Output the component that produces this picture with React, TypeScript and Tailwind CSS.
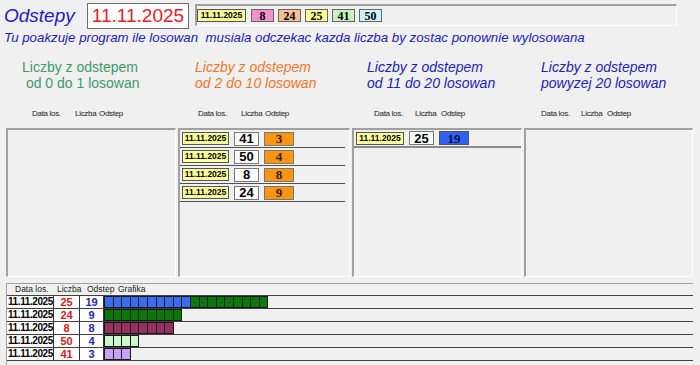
const sans = "font-['Liberation_Sans',Arial,sans-serif]";
const serif = "font-['Liberation_Serif','Times_New_Roman',serif]";

const sunken =
  "border-t-2 border-l-2 border-r border-b border-t-[#a0a0a0] border-l-[#a0a0a0] border-r-white border-b-white";

const midRows = [
  { n: 41, o: 3 },
  { n: 50, o: 4 },
  { n: 8, o: 8 },
  { n: 24, o: 9 },
];

const graphRows = [
  { n: 25, o: 19, parts: [{ c: "#3a6cf4", k: 10 }, { c: "#0a780a", k: 9 }] },
  { n: 24, o: 9, parts: [{ c: "#0a780a", k: 9 }] },
  { n: 8, o: 8, parts: [{ c: "#963060", k: 8 }] },
  { n: 50, o: 4, parts: [{ c: "#ccf5cc", k: 4 }] },
  { n: 41, o: 3, parts: [{ c: "#c8a0f5", k: 3 }] },
];

function DateChip({ w }: { w: string }) {
  return (
    <div
      className={`${w} h-[13px] bg-[#ffff99] border border-[#555] flex items-center justify-center text-[8.5px] font-bold leading-none text-black`}
    >
      11.11.2025
    </div>
  );
}

function Bars({ parts }: { parts: { c: string; k: number }[] }) {
  const cells: string[] = [];
  parts.forEach((p) => {
    for (let i = 0; i < p.k; i++) cells.push(p.c);
  });
  const step = 8.6;
  return (
    <svg width={Math.round(cells.length * step) + 1} height={12} shapeRendering="crispEdges">
      {cells.map((c, i) => {
        const x0 = Math.round(i * step);
        const x1 = Math.round((i + 1) * step);
        return (
          <rect key={i} x={x0 + 0.5} y={0.5} width={x1 - x0} height={11} fill={c} stroke="#1a1a1a" strokeWidth={1} />
        );
      })}
    </svg>
  );
}

export default function App() {
  return (
    <div className={`w-[700px] h-[365px] overflow-hidden bg-[#f0f0f0] ${sans}`}>
      {/* top bar */}
      <div className="flex items-start pl-[4px] pt-[3px] h-[29px]">
        <div className="w-[83px] mt-[2px] text-[19px] leading-[22px] italic text-[#1c1cc4]">Odstepy</div>
        <div className="w-[102px] h-[26px] bg-white border border-[#707070] flex items-center justify-center text-[19px] text-[#e0202e]">
          11.11.2025
        </div>
        <div className={`ml-[6px] mt-[1px] w-[482px] h-[22px] ${sunken} flex items-center`}>
          <DateChip w="w-[49px]" />
          <div className={`flex gap-[4px] ml-[5px] ${serif} text-[12px] font-bold text-black leading-none`}>
            <div className="w-[23px] h-[13px] bg-[#f590c8] border border-[#666] flex items-center justify-center">8</div>
            <div className="w-[23px] h-[13px] bg-[#fbc090] border border-[#666] flex items-center justify-center">24</div>
            <div className="w-[23px] h-[13px] bg-[#ffff99] border border-[#666] flex items-center justify-center">25</div>
            <div className="w-[23px] h-[13px] bg-[#c8f0c0] border border-[#666] flex items-center justify-center">41</div>
            <div className="w-[23px] h-[13px] bg-[#ccf4ff] border border-[#666] flex items-center justify-center">50</div>
          </div>
        </div>
      </div>

      {/* subtitle */}
      <div className="pl-[4px] mt-[1px] h-[16px] text-[13.3px] leading-[16px] italic text-[#2020b8] whitespace-pre">
        Tu poakzuje program ile losowan  musiala odczekac kazda liczba by zostac ponownie wylosowana
      </div>

      {/* headings */}
      <div className="flex pl-[6px] gap-[2px] mt-[13px] text-[14px] leading-[16px] h-[32px]">
        <div className="w-[170px] pl-[16px] text-[#3c9c6c] whitespace-pre">
          <div>Liczby z odstepem</div>
          <div> od 0 do 1 losowan</div>
        </div>
        <div className="w-[172px] pl-[17px] italic text-[#f07428]">
          <div>Liczby z odstepem</div>
          <div>od 2 do 10 losowan</div>
        </div>
        <div className="w-[170px] pl-[15px] italic text-[#2222bb]">
          <div>Liczby z odstepem</div>
          <div>od 11 do 20 losowan</div>
        </div>
        <div className="w-[169px] pl-[17px] italic text-[#2222bb]">
          <div>Liczby z odstepem</div>
          <div>powyzej 20 losowan</div>
        </div>
      </div>

      {/* labels */}
      <div className="flex mt-[18px] h-[10px] text-[8px] leading-[10px] tracking-[-0.3px] text-[#222] whitespace-nowrap">
        <span className="ml-[32px] w-[43px]">Data los.</span>
        <span className="w-[24px]">Liczba</span>
        <span className="w-[99px]">Odstep</span>
        <span className="w-[43px]">Data los.</span>
        <span className="w-[24px]">Liczba</span>
        <span className="w-[109px]">Odstep</span>
        <span className="w-[41px]">Data los.</span>
        <span className="w-[26px]">Liczba</span>
        <span className="w-[100px]">Odstep</span>
        <span className="w-[40px]">Data los.</span>
        <span className="w-[26px]">Liczba</span>
        <span>Odstep</span>
      </div>

      {/* panels */}
      <div className="flex pl-[6px] gap-[2px] mt-[9px] h-[149px]">
        <div className={`w-[170px] h-full ${sunken}`} />
        <div className={`w-[172px] h-full ${sunken}`}>
          {midRows.map((r) => (
            <div key={r.n} className="h-[18px] mr-[4px] border-b border-[#505050] flex items-center pl-[2px]">
              <DateChip w="w-[47px]" />
              <div className="ml-[5px] w-[25px] h-[14px] bg-white border border-[#777] flex items-center justify-center text-[13px] font-bold leading-none text-black">
                {r.n}
              </div>
              <div className={`ml-[5px] w-[30px] h-[14px] bg-[#ff9410] border border-[#777] flex items-center justify-center ${serif} text-[13px] font-bold leading-none text-[#3a1a00]`}>
                {r.o}
              </div>
            </div>
          ))}
        </div>
        <div className={`w-[170px] h-full ${sunken}`}>
          <div className="h-[18px] border-b-2 border-[#8a8a8a] flex items-center pl-[2px]">
            <DateChip w="w-[48px]" />
            <div className="ml-[5px] w-[25px] h-[14px] bg-white border border-[#777] flex items-center justify-center text-[13px] font-bold leading-none text-black">
              25
            </div>
            <div className={`ml-[5px] w-[30px] h-[14px] bg-[#2f62f2] border border-[#555] flex items-center justify-center ${serif} text-[13px] font-bold leading-none text-[#0a0a40]`}>
              19
            </div>
          </div>
        </div>
        <div className={`w-[169px] h-full ${sunken}`} />
      </div>

      {/* graph table */}
      <div className="ml-[6px] mt-[6px] w-[687px] h-[90px] border-t border-l border-[#a0a0a0]">
        <div className="h-[12px] border-b border-[#404040] flex items-center text-[8.5px] leading-none text-[#222] whitespace-nowrap">
          <span className="ml-[8px] w-[42px]">Data los.</span>
          <span className="w-[30px]">Liczba</span>
          <span className="w-[31px]">Odstep</span>
          <span>Grafika</span>
        </div>
        {graphRows.map((r) => (
          <div key={r.n} className="h-[13px] border-b border-[#404040] flex items-stretch">
            <div className="w-[47px] bg-white border-r border-[#333] flex items-center pl-[1px] text-[10px] font-bold leading-none tracking-[-0.4px] text-black whitespace-nowrap">
              11.11.2025
            </div>
            <div className="w-[26px] bg-white border-r border-[#333] flex items-center justify-center text-[11px] font-bold leading-none text-[#d02020]">
              {r.n}
            </div>
            <div className="w-[24px] bg-white border-r border-[#333] flex items-center justify-center text-[11px] font-bold leading-none text-[#2828a8]">
              {r.o}
            </div>
            <div className="flex items-start">
              <Bars parts={r.parts} />
            </div>
          </div>
        ))}
      </div>
    </div>
  );
}
